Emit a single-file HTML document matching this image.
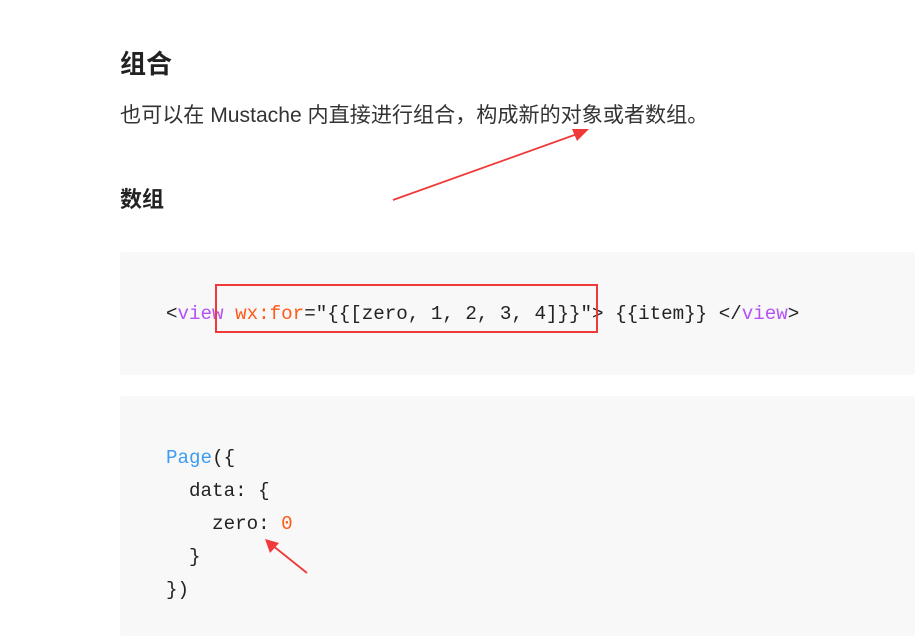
<!DOCTYPE html>
<html><head><meta charset="utf-8"><style>
body{margin:0;width:915px;height:632px;background:#fff;overflow:hidden;position:relative;font-family:"Liberation Sans","Noto Sans CJK SC",sans-serif;color:#222}
.a{position:absolute;white-space:nowrap}
.code{position:absolute;left:120px;width:795px;background:#f8f8f8;border-radius:3px}
.m{font-family:"Liberation Mono","Noto Sans CJK SC",monospace;font-size:19.2px;color:#222;white-space:pre;position:absolute;left:46px;line-height:33px}
.p{color:#b452f5}.o{color:#ff5a1a}.b{color:#3d9bf0}
</style></head><body>
<div class="a" style="left:120px;top:44px;font-size:26px;font-weight:bold;">组合</div>
<div class="a" style="left:120px;top:99px;font-size:21.1px;color:#333">也可以在 Mustache 内直接进行组合，构成新的对象或者数组。</div>
<div class="a" style="left:120px;top:182px;font-size:22px;font-weight:bold;">数组</div>
<div class="code" style="top:252px;height:123px">
<div class="m" style="top:46px">&lt;<span class="p">view</span> <span class="o">wx:for</span>="{{[zero, 1, 2, 3, 4]}}"&gt; {{item}} &lt;/<span class="p">view</span>&gt;</div>
</div>
<div class="code" style="top:396px;height:240px">
<div class="m" style="top:46px"><span class="b">Page</span>({
  data: {
    zero: <span class="o">0</span>
  }
})</div>
</div>
<div class="a" style="left:215px;top:284px;width:379px;height:45px;border:2px solid #f03a3a"></div>
<svg class="a" style="left:0;top:0" width="915" height="632">
<line x1="393" y1="200" x2="580" y2="133" stroke="#f03a3a" stroke-width="1.8"/>
<polygon points="589,129 572,129 577,141" fill="#f03a3a"/>
<line x1="307" y1="573" x2="272" y2="545" stroke="#f03a3a" stroke-width="1.8"/>
<polygon points="265,539 270,553 279,543" fill="#f03a3a"/>
</svg>
</body></html>
